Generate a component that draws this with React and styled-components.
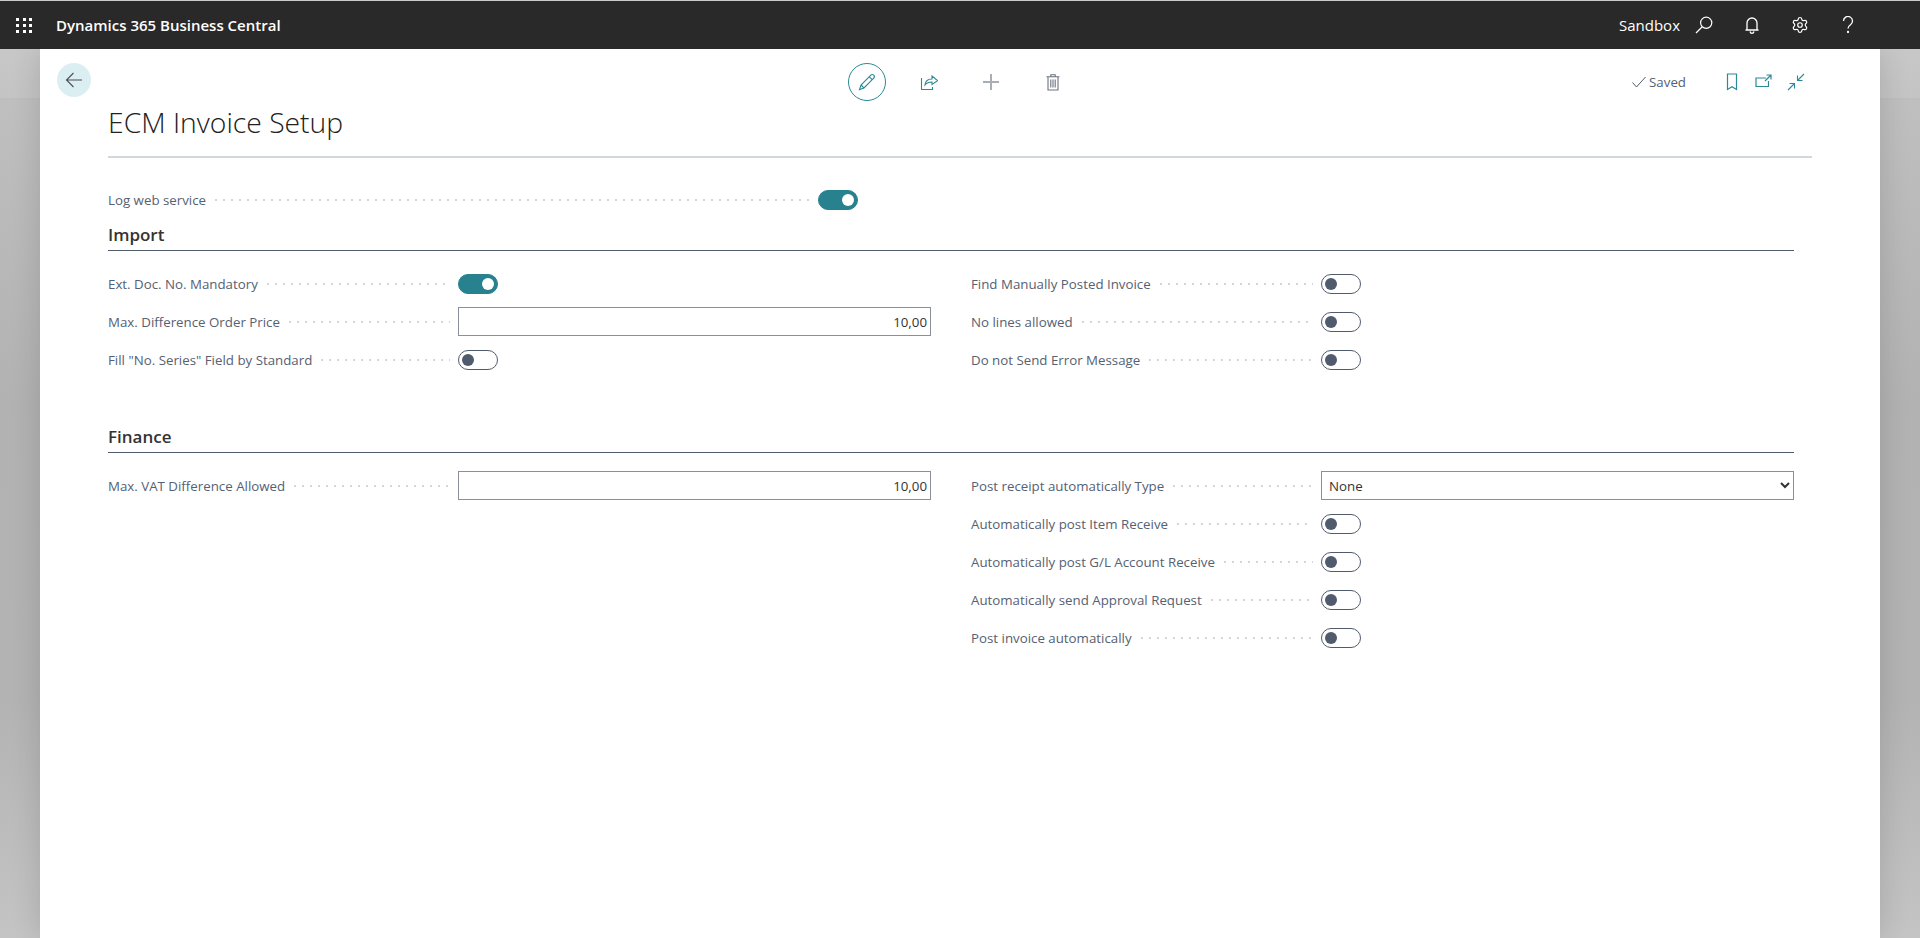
import React from 'react';
import styled, { createGlobalStyle } from 'styled-components';
import { Settings } from 'lucide-react';

const GlobalStyle = createGlobalStyle`
  html, body {
    margin: 0;
    height: 100%;
    overflow: hidden;
  }
  body {
    font-family: "Open Sans", "Liberation Sans", sans-serif;
    background: linear-gradient(
      180deg,
      #cbcbcb 0,
      #c4c4c4 98px,
      #b9b9b9 99px,
      #bfbfbf 100px,
      #b2b2b2 400px,
      #b3b3b3 700px,
      #c4c4c4 100%
    );
  }
  #root {
    height: 100%;
  }
`;

const Page = styled.div`
  height: 100%;
  display: flex;
  flex-direction: column;
  padding-top: 1px;
  box-sizing: border-box;
`;

const TopBar = styled.header`
  position: relative;
  z-index: 1;
  height: 48px;
  flex: none;
  background: #292929;
  color: #fff;
  display: flex;
  align-items: center;
  padding: 0 48px 0 16px;
`;

const Waffle = styled.div`
  width: 16px;
  display: grid;
  grid-template-columns: repeat(3, 3px);
  gap: 3px;
  justify-content: space-between;

  span {
    width: 3px;
    height: 3px;
    background: #fff;
  }
`;

const AppName = styled.div`
  margin-left: 24px;
  font-size: 15px;
  font-weight: 600;
`;

const EnvName = styled.div`
  margin-left: auto;
  font-size: 15px;
`;

const TopIcon = styled.div`
  width: 48px;
  display: flex;
  justify-content: center;
  align-items: center;
`;

const Panel = styled.main`
  flex: 1;
  margin: 0 40px;
  background: #fff;
  padding: 14px 0 0 68px;
  box-shadow: 0 0 28px rgba(0, 0, 0, 0.14);
`;

const Toolbar = styled.div`
  display: grid;
  grid-template-columns: 791px 224px 1fr;
  height: 38px;
  margin-left: -51px;
`;

const BackButton = styled.div`
  width: 34px;
  height: 34px;
  border-radius: 50%;
  background: #dbeff3;
  display: flex;
  align-items: center;
  justify-content: center;
`;

const Actions = styled.div`
  display: flex;
  gap: 24px;
`;

const ActionButton = styled.div`
  width: 38px;
  height: 38px;
  flex: none;
  box-sizing: border-box;
  border-radius: 50%;
  display: flex;
  align-items: center;
  justify-content: center;
  border: ${(props) => (props.$active ? '1px solid #2b8a96' : 'none')};
`;

const PageTools = styled.div`
  display: flex;
  align-items: center;
  justify-content: flex-end;
  padding-right: 74px;
`;

const SavedText = styled.span`
  font-size: 13.3px;
  color: #566172;
  margin: 0 36px 0 3px;
`;

const ToolIcon = styled.div`
  width: 20px;
  height: 20px;
  margin-left: ${(props) => props.$gap || 0}px;
`;

const Title = styled.h1`
  margin: 2px 68px 0 0;
  padding-bottom: 15px;
  border-bottom: 2px solid #d2d7de;
  font-size: 28.3px;
  line-height: 38px;
  font-weight: 300;
  color: #212121;
`;

const Rows = styled.div`
  margin-top: 23px;
`;

const Row = styled.div`
  height: 38px;
  display: flex;
  align-items: center;
`;

const Label = styled.div`
  width: ${(props) => props.$width || 350}px;
  flex: none;
  display: flex;
  align-items: center;
  font-size: 13.3px;
  color: #566172;
  white-space: nowrap;

  &::after {
    content: '';
    flex: 1;
    height: 2px;
    margin: 0 8px 0 9px;
    background: radial-gradient(circle at 1px 1px, #d6d6d6 1px, transparent 1px) left center / 8px 2px repeat-x;
  }
`;

const Section = styled.section`
  margin-right: 86px;
  margin-top: ${(props) => props.$top}px;
`;

const SectionHead = styled.h2`
  margin: 0;
  height: 32px;
  box-sizing: border-box;
  border-bottom: 1px solid #505c6d;
  font-size: 17px;
  line-height: 32px;
  font-weight: 600;
  color: #333;
`;

const Columns = styled.div`
  display: grid;
  grid-template-columns: 1fr 1fr;
  column-gap: 40px;
  padding-top: 14px;
`;

const Switch = styled.div`
  position: relative;
  width: 40px;
  height: 20px;
  box-sizing: border-box;
  border-radius: 10px;
  border: 1px solid ${(props) => (props.$on ? '#27818e' : '#505c6d')};
  background: ${(props) => (props.$on ? '#27818e' : '#fff')};

  &::after {
    content: '';
    position: absolute;
    top: 3px;
    left: ${(props) => (props.$on ? '23px' : '3px')};
    width: 12px;
    height: 12px;
    border-radius: 50%;
    background: ${(props) => (props.$on ? '#fff' : '#505c6d')};
  }
`;

const NumberBox = styled.div`
  flex: 1;
  height: 29px;
  margin-bottom: 1px;
  box-sizing: border-box;
  border: 1px solid #8a8f9c;
  display: flex;
  align-items: center;
  justify-content: flex-end;
  padding-right: 3px;
  font-size: 13.3px;
  color: #333;
`;

const SelectBox = styled.select`
  flex: 1;
  height: 29px;
  margin-bottom: 1px;
  box-sizing: border-box;
  border: 1px solid #8a8f9c;
  border-radius: 0;
  background: #fff;
  padding-left: 3px;
  font-family: inherit;
  font-size: 13.3px;
  color: #333;
`;

const Field = ({ label, width, children }) => (
  <Row>
    <Label $width={width}>{label}</Label>
    {children}
  </Row>
);

const BackIcon = () => (
  <svg width="18" height="18" viewBox="0 0 18 18" fill="none" stroke="#4a4f57" strokeWidth="1.1">
    <path d="M17 9H1.500M8.500 2 1.500 9l7 7" />
  </svg>
);

const PencilIcon = () => (
  <svg width="18" height="18" viewBox="0 0 18 18" fill="none" stroke="#2b8a96" strokeWidth="1.1">
    <path d="M1.500 16.500 3 12 12.800 2.200a1.900 1.900 0 0 1 2.900 2.900L6 14.900z" />
    <path d="M11.300 3.800l2.900 2.900M3 12l3 3" />
  </svg>
);

const ShareIcon = () => (
  <svg width="18" height="18" viewBox="0 0 18 18" fill="none" stroke="#2b8a96" strokeWidth="1.1">
    <path d="M1.500 5v11.500h11V14" />
    <path d="M5 12c.4-4 3-6 7-6V3l5.500 4.600L12 11.500V9c-3 0-5.300.8-7 3z" />
  </svg>
);

const PlusIcon = () => (
  <svg width="16" height="16" viewBox="0 0 16 16" fill="none" stroke="#a9adb5" strokeWidth="2">
    <path d="M8 0v16M0 8h16" />
  </svg>
);

const TrashIcon = () => (
  <svg width="14" height="17" viewBox="0 0 14 17" fill="none" stroke="#6c7280" strokeWidth="1.1">
    <path d="M.5 2.800h13M2 2.800V16h10V2.800M4.800 2.800V.8h4.400v2M4.800 5.500v8M7 5.500v8M9.200 5.500v8" />
  </svg>
);

const CheckIcon = () => (
  <svg width="14" height="12" viewBox="0 0 14 12" fill="none" stroke="#505c6d" strokeWidth="1">
    <path d="M.5 6.500l4 4.500L13.500 1" />
  </svg>
);

const BookmarkIcon = () => (
  <svg width="20" height="20" viewBox="0 0 20 20" fill="none" stroke="#2b8a96" strokeWidth="1.2">
    <path d="M5.500 2h9v15.500L10 14.800l-4.500 2.700z" />
  </svg>
);

const OpenIcon = () => (
  <svg width="20" height="20" viewBox="0 0 20 20" fill="none" stroke="#2b8a96" strokeWidth="1.2">
    <path d="M13 6H3v8.500h12.500V9M12 9l5.500-5.500M13.500 3h4.500v4.500" />
  </svg>
);

const CollapseIcon = () => (
  <svg width="20" height="20" viewBox="0 0 20 20" fill="none" stroke="#2b8a96" strokeWidth="1.100">
    <path d="M18 2l-6.500 6.500M11.500 3.500v5h5M2 18l6.500-6.500M3.500 11.500h5v5" />
  </svg>
);

const SearchIcon = () => (
  <svg width="18" height="18" viewBox="0 0 18 18" fill="none" stroke="#fff" strokeWidth="1.200">
    <circle cx="11.200" cy="6.800" r="5.600" />
    <path d="M7 11 1 17" />
  </svg>
);

const BellIcon = () => (
  <svg width="16" height="18" viewBox="0 0 16 18" fill="none" stroke="#fff" strokeWidth="1.300">
    <path d="M3 13.500V7a5 5 0 0 1 10 0v6.500M1.500 14h13" />
    <path d="M6 15.500c.3 1.200 1 1.800 2 1.800s1.700-.6 2-1.800" />
  </svg>
);

const HelpIcon = () => (
  <svg width="12" height="18" viewBox="0 0 12 18" fill="none" stroke="#fff" strokeWidth="1.300">
    <path d="M1.500 5a4.500 4.500 0 1 1 7 3.700C6.800 9.900 6 10.800 6 12.500" />
    <circle cx="6" cy="16" r=".5" />
  </svg>
);

const App = () => (
  <>
    <GlobalStyle />
    <Page>
      <TopBar>
        <Waffle>
          {Array.from({ length: 9 }, (_, i) => (
            <span key={i} />
          ))}
        </Waffle>
        <AppName>Dynamics 365 Business Central</AppName>
        <EnvName>Sandbox</EnvName>
        <TopIcon><SearchIcon /></TopIcon>
        <TopIcon><BellIcon /></TopIcon>
        <TopIcon><Settings size={18} strokeWidth={1.6} /></TopIcon>
        <TopIcon><HelpIcon /></TopIcon>
      </TopBar>
      <Panel>
        <Toolbar>
          <BackButton><BackIcon /></BackButton>
          <Actions>
            <ActionButton $active><PencilIcon /></ActionButton>
            <ActionButton><ShareIcon /></ActionButton>
            <ActionButton><PlusIcon /></ActionButton>
            <ActionButton><TrashIcon /></ActionButton>
          </Actions>
          <PageTools>
            <CheckIcon />
            <SavedText>Saved</SavedText>
            <ToolIcon><BookmarkIcon /></ToolIcon>
            <ToolIcon $gap={11}><OpenIcon /></ToolIcon>
            <ToolIcon $gap={13}><CollapseIcon /></ToolIcon>
          </PageTools>
        </Toolbar>
        <Title>ECM Invoice Setup</Title>
        <Rows>
          <Field label="Log web service" width={710}>
            <Switch $on />
          </Field>
        </Rows>
        <Section>
          <SectionHead>Import</SectionHead>
          <Columns>
            <div>
              <Field label="Ext. Doc. No. Mandatory"><Switch $on /></Field>
              <Field label="Max. Difference Order Price"><NumberBox>10,00</NumberBox></Field>
              <Field label={'Fill "No. Series" Field by Standard'}><Switch /></Field>
            </div>
            <div>
              <Field label="Find Manually Posted Invoice"><Switch /></Field>
              <Field label="No lines allowed"><Switch /></Field>
              <Field label="Do not Send Error Message"><Switch /></Field>
            </div>
          </Columns>
        </Section>
        <Section $top={42}>
          <SectionHead>Finance</SectionHead>
          <Columns>
            <div>
              <Field label="Max. VAT Difference Allowed"><NumberBox>10,00</NumberBox></Field>
            </div>
            <div>
              <Field label="Post receipt automatically Type">
                <SelectBox defaultValue="None"><option>None</option></SelectBox>
              </Field>
              <Field label="Automatically post Item Receive"><Switch /></Field>
              <Field label="Automatically post G/L Account Receive"><Switch /></Field>
              <Field label="Automatically send Approval Request"><Switch /></Field>
              <Field label="Post invoice automatically"><Switch /></Field>
            </div>
          </Columns>
        </Section>
      </Panel>
    </Page>
  </>
);

export default App;
